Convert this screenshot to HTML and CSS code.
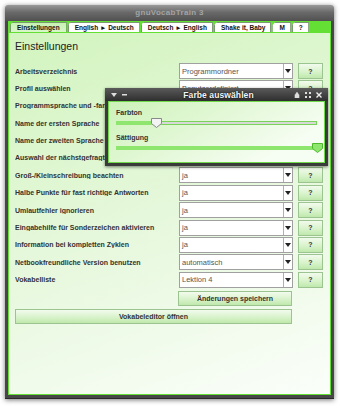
FILE: index.html
```html
<!DOCTYPE html>
<html lang="de">
<head>
    <meta charset="UTF-8">
    <title>gnuVocabTrain 3</title>
    <link rel="stylesheet" href="styles.css">
</head>
<body>
    <div class="window">
        <div class="titlebar">gnuVocabTrain 3</div>
        <div class="frame">
            <div class="tabs">
                <div class="tab active">Einstellungen</div>
                <div class="tab">English &#9658; Deutsch</div>
                <div class="tab">Deutsch &#9658; English</div>
                <div class="tab">Shake it, Baby</div>
                <div class="tab small">M</div>
                <div class="tab small">?</div>
            </div>
            <div class="content">
                <h1>Einstellungen</h1>
                <div class="rows">
                    <div class="row"><span class="label">Arbeitsverzeichnis</span><div class="combo"><span>Programmordner</span><i></i></div><button class="help">?</button></div>
                    <div class="row"><span class="label">Profil auswählen</span><div class="combo"><span>Benutzerdefiniert</span><i></i></div><button class="help">?</button></div>
                    <div class="row"><span class="label">Programmsprache und -farbe</span><div class="combo"><span>Deutsch</span><i></i></div><button class="help">?</button></div>
                    <div class="row"><span class="label">Name der ersten Sprache</span><div class="combo"><span>English</span><i></i></div><button class="help">?</button></div>
                    <div class="row"><span class="label">Name der zweiten Sprache</span><div class="combo"><span>Deutsch</span><i></i></div><button class="help">?</button></div>
                    <div class="row"><span class="label">Auswahl der nächstgefragten Vokabel</span><div class="combo"><span>zufällig</span><i></i></div><button class="help">?</button></div>
                    <div class="row"><span class="label">Groß-/Kleinschreibung beachten</span><div class="combo"><span>ja</span><i></i></div><button class="help">?</button></div>
                    <div class="row"><span class="label">Halbe Punkte für fast richtige Antworten</span><div class="combo"><span>ja</span><i></i></div><button class="help">?</button></div>
                    <div class="row"><span class="label">Umlautfehler ignorieren</span><div class="combo"><span>ja</span><i></i></div><button class="help">?</button></div>
                    <div class="row"><span class="label">Eingabehilfe für Sonderzeichen aktivieren</span><div class="combo"><span>ja</span><i></i></div><button class="help">?</button></div>
                    <div class="row"><span class="label">Information bei kompletten Zyklen</span><div class="combo"><span>ja</span><i></i></div><button class="help">?</button></div>
                    <div class="row"><span class="label">Netbookfreundliche Version benutzen</span><div class="combo"><span>automatisch</span><i></i></div><button class="help">?</button></div>
                    <div class="row"><span class="label">Vokabelliste</span><div class="combo"><span>Lektion 4</span><i></i></div><button class="help">?</button></div>
                </div>
                <div class="actions">
                    <button class="btn save">Änderungen speichern</button>
                    <button class="btn editor">Vokabeleditor öffnen</button>
                </div>

                <div class="dialog">
                    <div class="dialog-title">
                        <span class="dlg-icons left">
                            <svg width="6" height="4" viewBox="0 0 6 4"><path d="M0 0h6L3 4z" fill="#ddd"/></svg>
                            <svg width="5" height="2" viewBox="0 0 5 2"><rect width="5" height="1.5" fill="#ddd"/></svg>
                        </span>
                        <span class="dlg-name">Farbe auswählen</span>
                        <span class="dlg-icons right">
                            <svg width="6" height="6" viewBox="0 0 6 6"><path d="M1 2.5h4V6H1z M2 2.5V1.5a1 1 0 0 1 2 0v1" fill="#ddd" stroke="#ddd" stroke-width=".6"/></svg>
                            <svg width="6" height="6" viewBox="0 0 6 6"><path d="M0 0h2v2H0zM4 0h2v2H4zM0 4h2v2H0zM4 4h2v2H4z" fill="#ddd"/></svg>
                            <svg width="6" height="6" viewBox="0 0 6 6"><path d="M.5 .5l5 5M5.5 .5l-5 5" stroke="#eee" stroke-width="1.4"/></svg>
                        </span>
                    </div>
                    <div class="dialog-body">
                        <div class="slider-label">Farbton</div>
                        <div class="slider">
                            <div class="fill" style="width: 39px"></div>
                            <svg class="handle" style="left: 34px" width="11" height="10" viewBox="0 0 11 10"><path d="M.5 .5h10v5l-5 4-5-4z" fill="#f4f4f4" stroke="#888"/></svg>
                        </div>
                        <div class="slider-label">Sättigung</div>
                        <div class="slider">
                            <div class="fill" style="width: 200px"></div>
                            <svg class="handle" style="left: 195px" width="11" height="10" viewBox="0 0 11 10"><path d="M.5 .5h10v5l-5 4-5-4z" fill="#8ee66e" stroke="#4fb82d"/></svg>
                        </div>
                    </div>
                </div>
            </div>
        </div>
    </div>
</body>
</html>
```

FILE: styles.css
```css
* {
    margin: 0;
    padding: 0;
    box-sizing: border-box;
}

body {
    background: #ffffff;
    font-family: "Liberation Sans", Arial, sans-serif;
    width: 340px;
    height: 409px;
    overflow: hidden;
}

.window {
    margin: 5px 0 0 5px;
    width: 329px;
    height: 394px;
    border-radius: 3px 3px 0 0;
    box-shadow: 0 1px 5px rgba(0, 0, 0, 0.55);
    display: flex;
    flex-direction: column;
}

.titlebar {
    height: 16px;
    background: linear-gradient(#9a9a9a, #6a6a6a 45%, #505050);
    border-radius: 3px 3px 0 0;
    color: #a4a4a4;
    font-size: 8px;
    font-weight: bold;
    letter-spacing: 0.3px;
    text-align: center;
    line-height: 16px;
}

.frame {
    flex: 1;
    background: #474747;
    padding: 0 3px 3px;
    display: flex;
    flex-direction: column;
    border-bottom: 1px solid #2a2a2a;
}

.tabs {
    height: 11px;
    background: #63e033;
    display: flex;
    align-items: flex-end;
    padding-left: 2px;
    gap: 1px;
}

.tab {
    height: 10px;
    padding: 0 5px 0 6px;
    background: #ffffff;
    border: 1px solid #7a9a70;
    border-bottom: none;
    font-size: 6.5px;
    font-weight: bold;
    line-height: 9px;
    color: #111;
    clip-path: polygon(3px 0, 100% 0, 100% 100%, 0 100%, 0 3px);
}

.tab.small {
    padding: 0 5px 0 6px;
    min-width: 16px;
}

.tab.active {
    background: linear-gradient(#c8f2b4, #d8f6c8);
    padding: 0 6px 0 6px;
}

.content {
    flex: 1;
    position: relative;
    background: linear-gradient(160deg, #d2f4be 0%, #e6f8dc 50%, #fbfefa 100%);
    border: 1px solid #63e033;
    padding: 0 7px 0 6px;
}

h1 {
    font-size: 10.5px;
    font-weight: normal;
    color: #222;
    margin: 7px 0 11px 0;
    line-height: 12px;
}

.rows {
    display: flex;
    flex-direction: column;
    gap: 1.4px;
}

.row {
    display: flex;
    align-items: center;
    height: 16px;
}

.label {
    flex: 1;
    font-size: 7px;
    font-weight: bold;
    color: #333;
    white-space: nowrap;
    overflow: hidden;
}

.combo {
    width: 114px;
    height: 16px;
    background: #ffffff;
    border: 1px solid #a0a0a0;
    display: flex;
    align-items: center;
    font-size: 7.5px;
    color: #555;
}

.combo span {
    flex: 1;
    padding-left: 2px;
}

.combo i {
    width: 9px;
    height: 100%;
    border-left: 1px solid #b0b0b0;
    position: relative;
}

.combo i::after {
    content: "";
    position: absolute;
    left: 1px;
    top: 5px;
    border-left: 3px solid transparent;
    border-right: 3px solid transparent;
    border-top: 4px solid #222;
}

.help,
.btn {
    font-family: inherit;
    background: linear-gradient(#f2fbed, #d6f2c8 60%, #bfe8ac);
    border: 1px solid #9cc490;
    color: #333;
    font-weight: bold;
    font-size: 7px;
}

.help {
    width: 25px;
    height: 16px;
    margin-left: 5px;
}

.actions {
    display: flex;
    flex-direction: column;
    align-items: flex-end;
    gap: 3px;
    margin-top: 3px;
    padding-right: 31px;
}

.btn {
    height: 15px;
}

.save {
    width: 114px;
}

.editor {
    width: 100%;
}

.dialog {
    position: absolute;
    left: 96px;
    top: 55px;
    width: 223px;
    height: 78px;
    background: #3a3a3a;
    padding: 0 3px 3px;
    box-shadow: 0 1px 3px rgba(0, 0, 0, 0.5);
    display: flex;
    flex-direction: column;
}

.dialog-title {
    height: 13px;
    display: flex;
    align-items: center;
    background: linear-gradient(#5a5a5a, #2e2e2e);
    margin: 0 -3px;
    padding: 0 6px;
}

.dlg-icons {
    display: flex;
    align-items: center;
    gap: 5px;
    width: 40px;
}

.dlg-icons.right {
    justify-content: flex-end;
}

.dlg-name {
    flex: 1;
    text-align: center;
    color: #f4f4f4;
    font-size: 8.5px;
    font-weight: bold;
    letter-spacing: 0.1px;
    text-shadow: 0 0 2px #000;
    padding-left: 4px;
}

.dialog-body {
    flex: 1;
    background: linear-gradient(150deg, #cdf2b8, #f6fdf2 80%);
    border: 1px solid #6fd94a;
    padding: 5px 7px 0 7px;
}

.slider-label {
    font-size: 7px;
    font-weight: bold;
    color: #333;
    height: 11px;
    line-height: 11px;
}

.slider {
    position: relative;
    height: 4px;
    margin: 3px 0 7px;
    background: #d8d8d8;
    border: 1px solid #7ad45c;
}

.slider .fill {
    background: #8ee66e;
    margin: -1px 0 0 -1px;
    height: 4px;
}

.handle {
    position: absolute;
    top: -4px;
}
```
